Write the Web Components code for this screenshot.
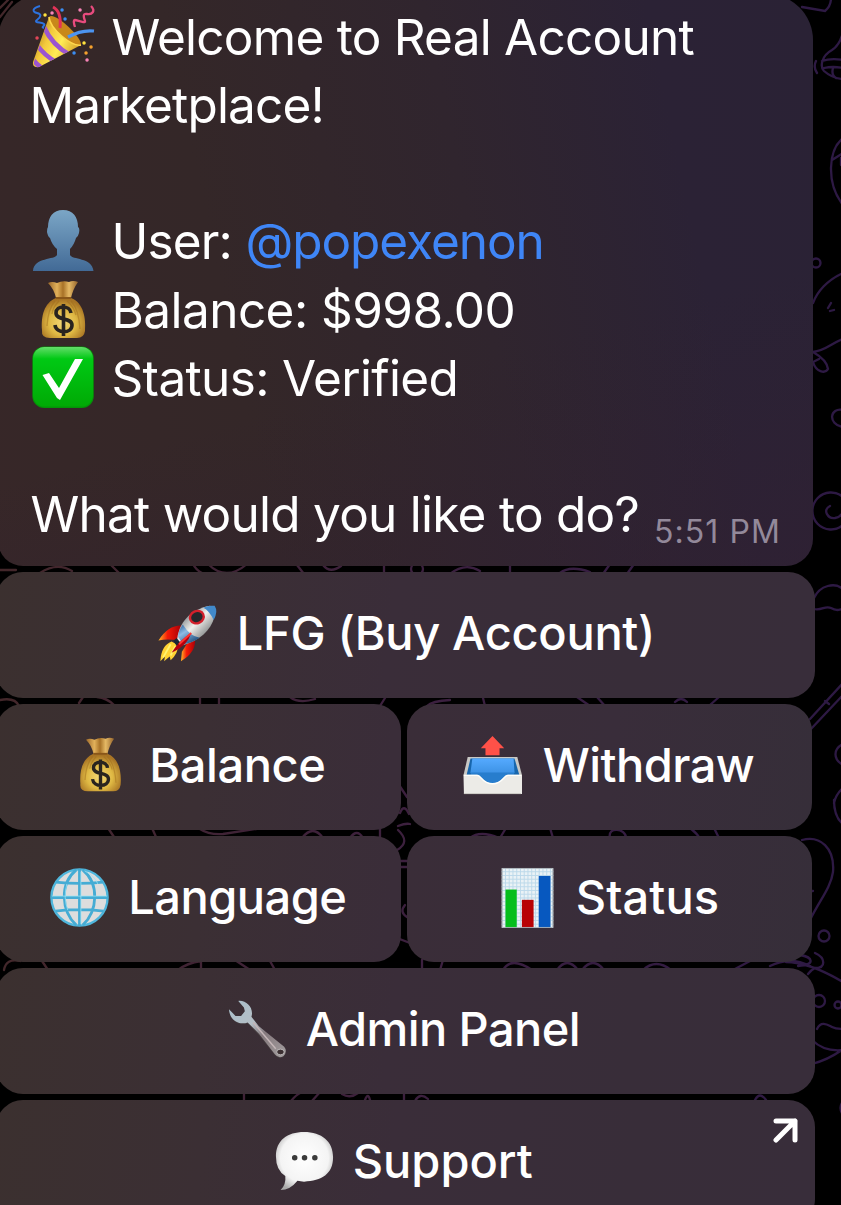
<!DOCTYPE html>
<html lang="en">
<head>
<meta charset="utf-8">
<title>Real Account Marketplace</title>
<style>
html,body{margin:0;height:1205px;background:#000;overflow:hidden}
body{font-family:Inter,"Liberation Sans",sans-serif;color:#fff}
</style>
</head>
<body>
<chat-view>
  <chat-bubble>
    <chat-line><chat-icon name="party" style="margin-top:2px"></chat-icon><fit-text ink="582">Welcome to Real Account</fit-text></chat-line>
    <chat-line><fit-text ink="288" style="margin-left:2px">Marketplace!</fit-text></chat-line>
    <chat-line></chat-line>
    <chat-line><chat-icon name="user"></chat-icon><fit-text ink="114" style="margin-left:3px">User:</fit-text><fit-text ink="294" style="color:#3f86f7;margin-left:18px">@popexenon</fit-text></chat-line>
    <chat-line><chat-icon name="bag" style="margin-top:3px"></chat-icon><fit-text ink="398" style="margin-left:3px">Balance: $998.00</fit-text></chat-line>
    <chat-line><chat-icon name="check" style="margin-top:2px"></chat-icon><fit-text ink="342" style="margin-left:1px">Status: Verified</fit-text></chat-line>
    <chat-line></chat-line>
    <chat-line><fit-text ink="606">What would you like to do?</fit-text><fit-text ink="122" style="font-size:32px;color:#93899a;margin:18px 0 0 18.5px">5:51 PM</fit-text></chat-line>
  </chat-bubble>
  <key-row><key-button icon="rocket" ink="411" shift="1">LFG (Buy Account)</key-button></key-row>
  <key-row class="pair"><key-button icon="bag" ink="172" shift="1">Balance</key-button><key-button icon="tray" ink="210">Withdraw</key-button></key-row>
  <key-row class="pair"><key-button icon="globe" ink="214" shift="1">Language</key-button><key-button icon="chart" ink="140" shift="-1" tail="1">Status</key-button></key-row>
  <key-row><key-button icon="wrench" ink="271" shift="-2" tail="3">Admin Panel</key-button></key-row>
  <key-row><key-button icon="speech" ink="178" shift="-1" tail="1" external>Support</key-button></key-row>
</chat-view>
<script>
const ICONS = {
party:`<defs><linearGradient id="c" x1="0" y1="0.3" x2="1" y2="0.8"><stop stop-color="#a9791a"/><stop offset=".3" stop-color="#f3c93c"/><stop offset=".55" stop-color="#ffec55"/><stop offset="1" stop-color="#c98a1c"/></linearGradient><clipPath id="k"><path d="M17 12 L2 57Q1 63 7 62L49 40Z"/></clipPath></defs>
<path d="M17 12C22 6 50 32 49 40C46 46 13 20 17 12Z" fill="#c8881a"/><path d="M17 12 L1 57Q0 63 7 62L49 40C40 42 17 22 17 12Z" fill="url(#c)"/>
<g clip-path="url(#k)" fill="none" stroke="#9b55cf" stroke-width="4.6"><path d="M12 22Q20 40 38 50M5 40Q12 50 24 57M-1 51Q3 59 12 64"/></g>
<path d="M17 12C18 24 40 42 49 40" fill="none" stroke="#ffd84d" stroke-width="1.6"/>
<path d="M28 23C29 13 27 5 21 2" fill="none" stroke="#e33358" stroke-width="3"/><path d="M36 32C45 27 53 25 62 26" fill="none" stroke="#4c94f0" stroke-width="3.2"/>
<path d="M8 1C0 3 0 7 5 8S9 12 5 15 10 17 12 19 8 22 12 23" fill="none" stroke="#2d73df" stroke-width="2"/>
<path d="M59 1C64 6 60 10 55 9S52 13 53 16 45 15 43 15 42 19 43 22" fill="none" stroke="#e84b7e" stroke-width="2.3"/>
<g stroke-width="3.4" stroke-linecap="round"><path d="M13 10h.1M52 38h.1" stroke="#ffe23f"/><path d="M20 8h.1M48 5h.1M55 55h.1" stroke="#f884b8"/><path d="M30 5h.1M33 14h.1M42 48h.1" stroke="#3b8df2"/><path d="M59 42h.1M54 48h.1" stroke="#f5a12d"/><path d="M5 33h.1" stroke="#e04658"/></g>`,
user:`<defs><linearGradient id="u" x2="0" y2="1"><stop stop-color="#7ba6c6"/><stop offset="1" stop-color="#426a96"/></linearGradient></defs><path d="M31 2C41 2 46 9 46 19Q48 20 47 25Q46 29 44 30Q42 37 38 41V47C40 52 60 49 61.500 63H1C2 49 23 52 25 47V41Q20 37 18 30Q16 29 15 24Q15 20 16 19C16 9 21 2 31 2Z" fill="url(#u)"/>`,
bag:`<defs><radialGradient id="b" cx=".48" cy=".62" r=".58"><stop stop-color="#f3d875"/><stop offset=".55" stop-color="#dfb843"/><stop offset="1" stop-color="#a87424"/></radialGradient><linearGradient id="n"><stop stop-color="#9a672a"/><stop offset=".3" stop-color="#e2b15a"/><stop offset=".5" stop-color="#a87227"/><stop offset=".7" stop-color="#e5b965"/><stop offset="1" stop-color="#94632b"/></linearGradient></defs><path d="M16 4Q20 2 25 4 31 1 37 3 41 1 46 3Q41 10 39 19H24Q22 10 16 4Z" fill="url(#n)"/><path d="M24 19H39C52 24 54 40 53 52Q52 59 45 59H18Q9 59 10 51C9 37 12 24 24 19Z" fill="url(#b)"/><path d="M23 22Q16 30 15 47M27 22Q21 28 20 35M39 22Q47 31 48 50M35 22Q42 28 44 36" fill="none" stroke="#9d6b1b" stroke-opacity=".45" stroke-width="1.3"/><path d="M24 19H39" stroke="#8a5719" stroke-width="2"/><path d="M39 34C38 26 24 26 24 34C24 42 40 38 40 46C40 55 24 55 23 46M31.500 25V57" fill="none" stroke="#29241f" stroke-width="3.6"/>`,
check:`<defs><linearGradient id="g" x2="0" y2="1"><stop stop-color="#63dd69"/><stop offset=".2" stop-color="#00c914"/><stop offset="1" stop-color="#00aa05"/></linearGradient></defs><rect x=".3" y=".5" width="61.500" height="61.500" rx="12" fill="#049407"/><rect x="1" y="1" width="60" height="59.500" rx="11.500" fill="url(#g)"/><path d="M10.500 29L17 27 27 42 43 13H51L28 54 25 52Z" fill="#fff"/>`,
rocket:`<defs><linearGradient id="r" x1=".2" y1=".2" x2=".8" y2=".8"><stop stop-color="#7c8287"/><stop offset=".45" stop-color="#f0f0ec"/><stop offset="1" stop-color="#777b7c"/></linearGradient><linearGradient id="f"><stop stop-color="#ffb627"/><stop offset=".4" stop-color="#f51b08"/><stop offset="1" stop-color="#a90008"/></linearGradient><linearGradient id="l" x1="0" y1="0" x2=".7" y2="1"><stop stop-color="#285c95"/><stop offset=".4" stop-color="#8ebbe5"/><stop offset="1" stop-color="#184776"/></linearGradient></defs><g transform="translate(-1.500 1)"><path d="M26 22Q12 22 2 38Q12 36 23 38Z" fill="url(#f)"/><path d="M41 37Q42 51 26 60L27 50 32 42Z" fill="url(#f)"/><path d="M16 39Q5 43 4 60L9 55 8 60 14 55 15 59Q23 52 23 43Z" fill="#ffd334"/><path d="M15 42L7 56M20 44L15 54" stroke="#fff36f" stroke-width="2"/><path d="M18 38L22 35 25 41 22 45Z" fill="#172735"/><path d="M22 36C24 20 35 5 57 1Q64 3 62 12C58 28 45 38 28 43Z" fill="url(#r)"/><path d="M23 34Q23 28 28 21Q36 34 46 35Q37 41 28 42Z" fill="url(#l)"/><path d="M50 3Q55 0 62 1Q66 7 61 16Q56 6 50 3Z" fill="#4189ca"/><path d="M16 51Q24 38 37 30Q33 44 16 51Z" fill="#b5000d"/><path d="M37 30L24 42" stroke="#ff3431" stroke-width="2"/><ellipse cx="43" cy="13" rx="7.500" ry="6.500" fill="#25282c" stroke="#d3202b" stroke-width="2.500" transform="rotate(-25 43 13)"/></g>`,
tray:`<defs><linearGradient id="t" x2="0" y2="1"><stop stop-color="#55aaff"/><stop offset="1" stop-color="#277dcd"/></linearGradient></defs><path d="M31.500 0L44 13H39V20.500H24V13H19Z" fill="#ff5148"/><path d="M5 22.500H58L63 42H.500Z" fill="#c8c8c5"/><path d="M8 24H55L60 41 57 54H7L4 41Z" fill="#1766ad"/><path d="M10 24H54L55 39 45 54H16L8 39Z" fill="url(#t)"/><path d="M8 39H55L48 54H16Z" fill="#277dcd"/><path d="M.500 41.500H15C20 41.500 20 50.500 31.500 50.500S43 41.500 48 41.500H63V62H1Z" fill="#ecebe7"/><path d="M1 42H15C20 42 20 51 31.500 51S43 42 48 42H62" stroke="#fffefa" fill="none" stroke-width="1.5"/><path d="M1 61.500H62" stroke="#c8c6c1"/>`,
globe:`<circle cx="31.500" cy="31.500" r="30" fill="#ddd" stroke="#4fb6dc" stroke-width="2.500"/><g fill="none" stroke="#45acd4" stroke-width="3"><path d="M31.500 1V62M1 31.500H62M6 15Q31 18 57 15M6 46Q31 43 57 46"/><path d="M28 2C10 17 12 46 28 61M35 2C53 17 51 46 35 61"/></g><path d="M33 4V60M2 30H61M18 17Q14 32 19 45M51 17Q49 10 37 3" fill="none" stroke="#9be5f7" stroke-width=".8"/>`,
chart:`<path d="M4 0H59V64H4Z" fill="#eaf2f6"/><path d="M8 0V64M12 0V64M16 0V64M20 0V64M24 0V64M28 0V64M32 0V64M36 0V64M40 0V64M44 0V64M48 0V64M52 0V64M56 0V64M4 4H59M4 8H59M4 12H59M4 16H59M4 20H59M4 24H59M4 28H59M4 32H59M4 36H59M4 40H59M4 44H59M4 48H59M4 52H59M4 56H59M4 60H59" stroke="#bcd8ea"/><path d="M8 23H20V64H8Z" fill="#05be1c"/><path d="M25.500 34H38V64H25.500Z" fill="#b80205"/><path d="M43.500 8.500H56V64H43.500Z" fill="#0758bf"/><path d="M4.500 .5H58.500V63.500H4.500Z" fill="none" stroke="#a8b1b7"/>`,
wrench:`<defs><linearGradient id="w" x1="0" y1="0" x2="1" y2="1"><stop stop-color="#a8bfcb"/><stop offset=".4" stop-color="#b5bfc6"/><stop offset=".6" stop-color="#85797d"/><stop offset="1" stop-color="#a49fa0"/></linearGradient></defs><path d="M11 2C20 1 28 9 25 20L32 29 59 51Q64 57 59 61Q54 64 50 59L33 38 21 25C13 28 3 24 1 11L8 17 14 17 18 12 17 8Z" fill="#433a3d"/><path d="M11 1C20 0 28 9 25 18L33 28 60 50Q64 55 59 60Q54 63 50 58L33 36 21 24C13 27 2 23 1 10Q5 14 8 17L14 17 18 12 17 8Z" fill="url(#w)"/><path d="M27 24L51 52" stroke="#c6b7b9" stroke-width="1.5"/><ellipse cx="56" cy="55.500" rx="4" ry="3" fill="#3b2f31" stroke="#d2cfd0" stroke-width=".8"/>`,
speech:`<defs><radialGradient id="s" cx=".5" cy=".45" r=".6"><stop stop-color="#fff"/><stop offset=".7" stop-color="#f4f4f4"/><stop offset="1" stop-color="#aaa"/></radialGradient></defs><path d="M31 0C50 0 62 10 62 27C62 45 50 52 31 53L24 52Q16 62 6 62Q12 56 11 47Q1 41 1 26C1 9 13 0 31 0Z" fill="url(#s)"/><path d="M21 27.500h.1M31.500 27.500h.1M42.500 27.500h.1" stroke="#3b3b3b" stroke-width="5.800" stroke-linecap="round"/>`
};

function mount(host, html){ host.attachShadow({mode:'open'}).innerHTML = html; }

/* Emoji-style pictogram in a 63-unit box. */
customElements.define('chat-icon', class extends HTMLElement{
  connectedCallback(){
    mount(this, `<style>:host{display:block;flex:none;width:var(--icon,63px);height:var(--icon,63px)}svg{display:block;width:100%;height:100%;overflow:visible}</style><svg viewBox="0 0 63 63" aria-hidden="true">${ICONS[this.getAttribute('name')]}</svg>`);
  }
});

customElements.define('chat-line', class extends HTMLElement{
  connectedCallback(){
    mount(this, `<style>:host{display:flex;height:68.14px;line-height:68.14px;align-items:flex-start}::slotted(chat-icon){margin:1px 18px 0 0}</style><slot></slot>`);
  }
});

customElements.define('chat-bubble', class extends HTMLElement{
  connectedCallback(){
    mount(this, `<style>:host{display:block;box-sizing:border-box;width:815px;height:572px;margin:-6px 0 0 -2px;padding:9px 0 0 33.5px;font-size:49.500px;font-weight:400;border-radius:46px 46px 27px 25px;background:linear-gradient(165deg,#2f203200 62%,#31203290),linear-gradient(78deg,#372728 0%,#342728 30%,#30252e 58%,#2b2235 82%,#2a2235 100%)}</style><slot></slot>`);
  }
});

customElements.define('key-row', class extends HTMLElement{
  connectedCallback(){
    mount(this, `<style>:host{display:grid;grid-template-columns:819px;height:126px;margin:6px 0 0 -4px}:host(.pair){grid-template-columns:405px 405px;column-gap:6px}</style><slot></slot>`);
  }
});

customElements.define('key-button', class extends HTMLElement{
  connectedCallback(){
    const ext = this.hasAttribute('external') ? `<svg class="ext" viewBox="0 0 26 26"><path d="M3 3H22V22M22 3L3 22" fill="none" stroke="#fff" stroke-width="5" stroke-linecap="round" stroke-linejoin="round"/></svg>` : '';
    mount(this, `<style>
:host{--icon:59px;position:relative;display:flex;align-items:center;justify-content:center;box-sizing:border-box;height:126px;padding:0 2px 4px 0;border-radius:27px;font-size:47px;font-weight:500;line-height:60px;background:linear-gradient(97deg,#3b302f 0,#3b2f34 210px,#3a2d39 400px,#382d39 640px,#382d3a 819px)}
:host(:nth-child(2)){background:linear-gradient(97deg,#3a2d38,#392d3a 50%,#362e39)}
.row{display:flex;align-items:center;gap:21.500px}
fit-text{margin:0 ${this.getAttribute('tail') || 0}px 0 ${this.getAttribute('shift') || 0}px}
.ext{position:absolute;right:16px;top:18px;width:26px;height:26px}
</style><div class="row"><chat-icon name="${this.getAttribute('icon')}"></chat-icon><fit-text ink="${this.getAttribute('ink')}">${this.textContent}</fit-text></div>${ext}`);
  }
});

/* Chat screen with the doodle wallpaper behind its messages. */
customElements.define('chat-view', class extends HTMLElement{
  connectedCallback(){
    mount(this, `<style>:host{display:block;position:relative;height:1205px;overflow:hidden;background:#000}.paper{position:absolute;inset:0;width:841px;height:1205px}.content{position:relative;display:flex;flex-direction:column}</style>
<svg class="paper" viewBox="0 0 841 1205" aria-hidden="true"><defs><linearGradient id="p" gradientUnits="userSpaceOnUse" x1="0" y1="0" x2="841" y2="0"><stop stop-color="#43272a"/><stop offset=".5" stop-color="#3c203f"/><stop offset="1" stop-color="#2d1944"/></linearGradient></defs>
<g fill="none" stroke="url(#p)" stroke-width="2.3" stroke-linecap="round">
<path d="M802 7L825 11Q831 6 831-2M843 32Q840 45 832 50C821 56 820 67 824 71Q832 78 842 79M822 61Q831 58 843 60M824 68Q833 66 843 68M833 68Q831 75 836 78M816 61Q813 67 817 73"/>
<path d="M843 138C828 150 826 183 843 205M832 160L843 153M841 158V165M843 273C827 280 817 292 813 303M843 339C832 343 825 351 813 352Q827 360 828 369C825 374 816 372 813 362L819 359M828 308L831 303M830 311L834 310"/>
<circle cx="816" cy="263" r="4.500"/><path d="M843 410C830 407 827 424 843 427M843 497A18.500 18.500 0 1 0 843 525M830 506C822 510 828 519 835 518Q841 517 843 512"/>
<path d="M814 598C820 585 835 582 843 589M814 609C822 611 825 605 831 608S838 610 843 609M843 683L810 719M843 695L810 730M825 701L829 704"/>
<path d="M843 744C833 749 833 759 843 765M843 788Q836 794 834 803M834 800Q834 817 843 824M802 840C820 835 835 848 833 872C831 887 820 900 811 918M812 891H813M815 953C826 958 826 968 815 968Q811 970 808 974M786 962Q809 962 843 982M800 955C813 957 816 965 798 966"/>
<circle cx="824" cy="936" r="5.500"/><circle cx="819" cy="1001" r="6"/><circle cx="838" cy="1005" r="3.500"/><path d="M817 1029C821 1020 828 1025 832 1027S838 1029 843 1029M812 1040Q824 1052 843 1050M843 1049Q830 1059 812 1064M846 1098Q835 1108 846 1118"/>
<path d="M0 8L8 0M0 17L12 2M0 570H16M40 573Q57 562 72 571M110 564L120 574M193 564Q196 570 202 573M208 564Q226 582 247 564M297 565L304 574M323 565Q330 574 341 566M384 564V574"/><circle cx="417" cy="569" r="6"/><path d="M450 574Q465 562 480 571M510 565V573M560 573Q570 565 590 572M603 574L610 564M627 574L634 564"/>
<path d="M0 700Q15 697 19 706M79 703L83 697M97 697Q107 698 114 705M200 705V698M219 705V698M290 697Q299 704 315 699M380 706L385 698M427 706Q432 701 450 700M485 706L483 698M577 697L590 706M597 697L605 706M675 702Q681 696 687 702M710 705L719 697"/>
<path d="M108 828L114 837M152 828L156 837M200 829Q209 835 223 834L262 828M302 838Q313 824 323 838M350 838Q357 828 363 838M380 828V838M470 838Q480 830 499 838M500 838L506 828M550 828L553 838M610 838C607 826 626 828 626 838M690 828Q701 837 698 838M714 828L719 838"/>
<path d="M4 970Q6 958 20 961M42 961L48 970M178 970Q187 963 201 961V970M235 960Q244 966 250 970M270 961L275 970M422 960V970M440 970L443 960M503 970Q511 956 532 970M557 970Q567 956 578 970M582 970Q593 956 604 970M643 970Q656 958 671 970M735 969L750 961M770 966Q790 956 810 966M244 1092V1101M291 1101Q296 1095 300 1093M312 1101L320 1092M342 1094Q350 1099 358 1093M365 1100Q368 1092 370 1100M404 1101V1092M415 1101Q420 1092 428 1099M755 1100Q760 1091 766 1100"/>
<path d="M399 785L407 797M400 813Q404 803 409 814M398 826Q406 823 410 824M398 830Q411 842 397 850M398 861H410M398 867H410M405 905Q399 912 407 917M397 938L410 943"/>
</g></svg><div class="content"><slot></slot></div>`);
  }
});

/* One-line text, tracked so its inked width equals the "ink" attribute.
   Defined last: it reads the font that the other elements pass down. */
customElements.define('fit-text', class extends HTMLElement{
  connectedCallback(){
    mount(this, `<style>:host{display:block;flex:none;white-space:pre}span{display:block}</style><span><slot></slot></span>`);
    const ink = +this.getAttribute('ink'), text = this.textContent, cs = getComputedStyle(this);
    const ctx = document.createElement('canvas').getContext('2d');
    ctx.font = `${cs.fontWeight} ${cs.fontSize} ${cs.fontFamily}`;
    const m = ctx.measureText(text), natural = m.actualBoundingBoxRight + m.actualBoundingBoxLeft;
    const span = this.shadowRoot.querySelector('span');
    span.style.letterSpacing = (ink - natural) / (text.length - 1) + 'px';
    span.style.marginLeft = m.actualBoundingBoxLeft + 'px';
    this.style.width = ink + 'px';
  }
});
</script>
</body>
</html>
